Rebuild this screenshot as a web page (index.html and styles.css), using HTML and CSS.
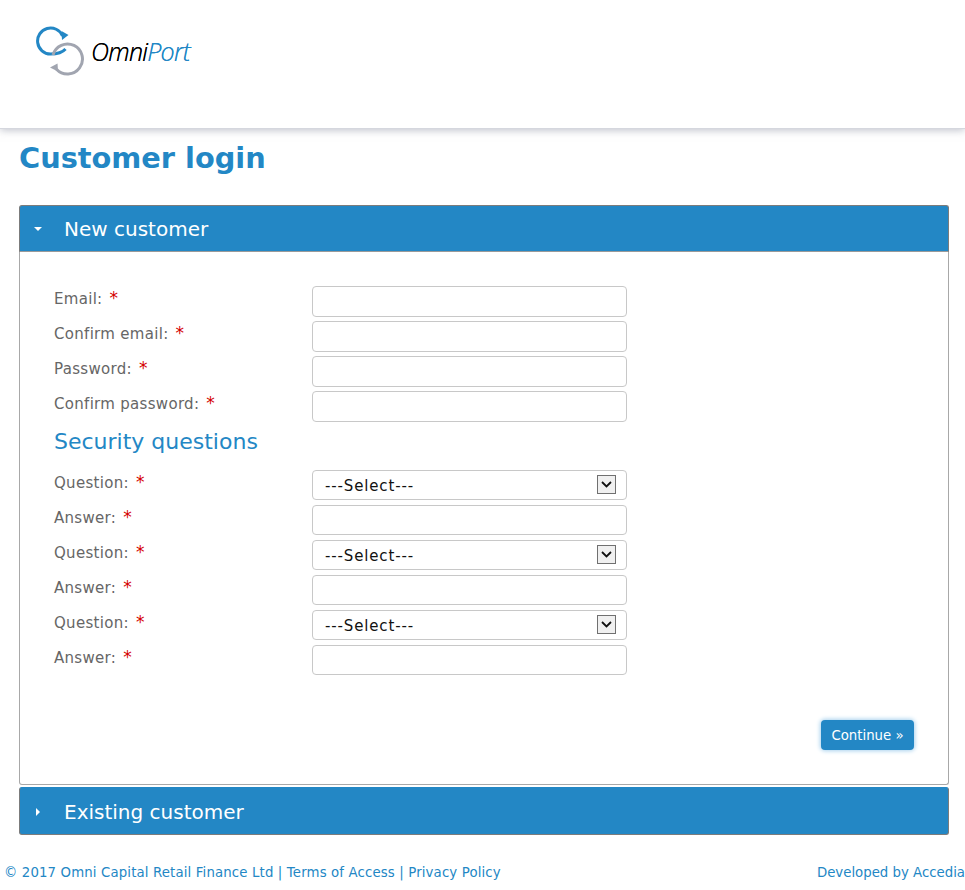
FILE: index.html
```html
<!DOCTYPE html>
<html lang="en">
<head>
<meta charset="utf-8">
<title>Customer login</title>
<link rel="stylesheet" href="styles.css">
</head>
<body>
<header class="site-header">
  <a class="logo" href="#">
    <svg class="logo-mark" width="50" height="50" viewBox="0 0 50 50" fill="none">
      <path d="M27.500 9.800 A13 13 0 1 0 15.500 28 C22 28 27 27 30.500 23" stroke="#2387c5" stroke-width="3"/>
      <path d="M26.500 5 L33.500 9 L27 14 Z" fill="#2387c5"/>
      <path d="M18 29 A15 15 0 1 1 21.500 43.200" stroke="#a1a5b0" stroke-width="3"/>
      <path d="M15 41.500 L22.500 37.500 L23 45.500 Z" fill="#a1a5b0"/>
    </svg>
    <span class="logo-text">Omni<span class="logo-accent">Port</span></span>
  </a>
</header>
<main class="page">
  <h1 class="page-title">Customer login</h1>
  <section class="panel panel-open">
    <h2 class="panel-head">
      <svg class="caret" width="8" height="8" viewBox="0 0 8 8"><path d="M0 2 H8 L4 6 Z" fill="#fff"/></svg>
      <span>New customer</span>
    </h2>
    <form class="panel-body">
      <div class="row"><label class="label">Email: <b class="req">*</b></label><input class="field" type="text"></div>
      <div class="row"><label class="label">Confirm email: <b class="req">*</b></label><input class="field" type="text"></div>
      <div class="row"><label class="label">Password: <b class="req">*</b></label><input class="field" type="password"></div>
      <div class="row"><label class="label">Confirm password: <b class="req">*</b></label><input class="field" type="password"></div>
      <h3 class="subhead">Security questions</h3>
      <div class="row"><label class="label">Question: <b class="req">*</b></label><div class="select-wrap"><select class="field select"><option>---Select---</option></select><svg class="select-arrow" width="19" height="19" viewBox="0 0 19 19"><rect x=".5" y=".5" width="18" height="18" fill="#f0f0f0" stroke="#707070"/><path d="M5 7 L9.500 11.500 L14 7" fill="none" stroke="#111" stroke-width="1.800"/></svg></div></div>
      <div class="row"><label class="label">Answer: <b class="req">*</b></label><input class="field field-short" type="text"></div>
      <div class="row"><label class="label">Question: <b class="req">*</b></label><div class="select-wrap"><select class="field select"><option>---Select---</option></select><svg class="select-arrow" width="19" height="19" viewBox="0 0 19 19"><rect x=".5" y=".5" width="18" height="18" fill="#f0f0f0" stroke="#707070"/><path d="M5 7 L9.500 11.500 L14 7" fill="none" stroke="#111" stroke-width="1.800"/></svg></div></div>
      <div class="row"><label class="label">Answer: <b class="req">*</b></label><input class="field field-short" type="text"></div>
      <div class="row"><label class="label">Question: <b class="req">*</b></label><div class="select-wrap"><select class="field select"><option>---Select---</option></select><svg class="select-arrow" width="19" height="19" viewBox="0 0 19 19"><rect x=".5" y=".5" width="18" height="18" fill="#f0f0f0" stroke="#707070"/><path d="M5 7 L9.500 11.500 L14 7" fill="none" stroke="#111" stroke-width="1.800"/></svg></div></div>
      <div class="row"><label class="label">Answer: <b class="req">*</b></label><input class="field field-short" type="text"></div>
      <div class="actions"><button class="btn" type="button">Continue »</button></div>
    </form>
  </section>
  <section class="panel panel-closed">
    <h2 class="panel-head">
      <svg class="caret" width="8" height="8" viewBox="0 0 8 8"><path d="M2 0 V8 L6 4 Z" fill="#fff"/></svg>
      <span>Existing customer</span>
    </h2>
  </section>
</main>
<footer class="site-footer">
  <div>© 2017 Omni Capital Retail Finance Ltd | <a href="#">Terms of Access</a> | <a href="#">Privacy Policy</a></div>
  <div class="credit">Developed by <a href="#">Accedia</a></div>
</footer>
</body>
</html>
```
FILE: styles.css
```css
* { box-sizing: border-box; }
html, body { margin: 0; padding: 0; }
body {
  background: #fff;
  color: #555;
  font-family: "DejaVu Sans", Verdana, sans-serif;
  font-size: 14px;
  height: 890px;
  overflow: hidden;
}
a { color: inherit; text-decoration: none; }

.site-header {
  height: 129px;
  padding: 26px 0 0 35px;
  box-shadow: 0 1px 8px rgba(120, 125, 145, .5);
  border-bottom: 1px solid #d5d7de;
}
.logo { display: flex; align-items: center; gap: 6px; }
.logo-mark { display: block; }
.logo-text {
  font-family: "Open Sans", sans-serif;
  font-style: italic;
  font-weight: 300;
  font-size: 25px;
  letter-spacing: -.7px;
  color: #000;
  text-shadow: 0 0 .4px currentColor;
}
.logo-accent { color: #2387c5; }

.page { padding: 0 16px 0 19px; }
.page-title {
  margin: 11px 0 28px;
  font-size: 28.800px;
  line-height: 37px;
  font-weight: 700;
  color: #2387c5;
}

.panel-head {
  margin: 0;
  height: 47px;
  display: flex;
  align-items: center;
  background: #2387c5;
  color: #fff;
  font-size: 20px;
  font-weight: 400;
  border: 1px solid #7c7c7c;
  border-bottom-color: #9a9a9a;
  border-radius: 3px 3px 0 0;
  padding-left: 14px;
}
.caret { margin-right: 22px; flex: none; }
.panel-open { border-radius: 3px; }
.panel-body {
  height: 533px;
  border: 1px solid #a8a8a8;
  border-top: 0;
  border-radius: 0 0 3px 3px;
  padding: 34px 34px 0;
}
.panel-closed { margin-top: 2px; }
.panel-closed .panel-head {
  height: 48px;
  padding-top: 1px;
  border-radius: 3px;
  border-top-color: #2387c5;
  border-bottom-color: #7c7c7c;
}

.row { display: flex; align-items: flex-start; height: 35px; }
.label {
  width: 258px;
  flex: none;
  padding-top: 3px;
  line-height: 18px;
  font-size: 15px;
  letter-spacing: .3px;
  color: #666;
}
.req { color: #d40000; font-weight: 400; font-size: 17px; margin-left: 2px; }
.field {
  width: 315px;
  height: 31px;
  border: 1px solid #c8c8c8;
  border-radius: 4px;
  background: #fff;
  font-family: inherit;
  font-size: 15px;
  color: #111;
  padding: 0 12px;
}
.field-short { height: 30px; }
.subhead {
  margin: 0;
  height: 44px;
  font-size: 22px;
  line-height: 32px;
  font-weight: 400;
  color: #2387c5;
}
.select-wrap { position: relative; width: 315px; height: 30px; }
.select {
  display: block;
  height: 30px;
  padding-top: 2px;
  letter-spacing: .85px;
  appearance: none;
  -webkit-appearance: none;
}
.select-arrow { position: absolute; right: 11px; top: 5px; pointer-events: none; }
.actions { display: flex; justify-content: flex-end; margin-top: 40px; }
.btn {
  width: 93px;
  height: 30px;
  border: 0;
  border-radius: 4px;
  background: #2387c5;
  color: #fff;
  font-family: inherit;
  font-size: 13.300px;
  box-shadow: 0 0 4px 1px #a9d2ee;
}

.site-footer {
  display: flex;
  justify-content: space-between;
  padding: 29px 0 0 4px;
  font-size: 13.300px;
  letter-spacing: .14px;
  line-height: 18px;
  color: #2387c5;
}
.credit { letter-spacing: 0; }
```
